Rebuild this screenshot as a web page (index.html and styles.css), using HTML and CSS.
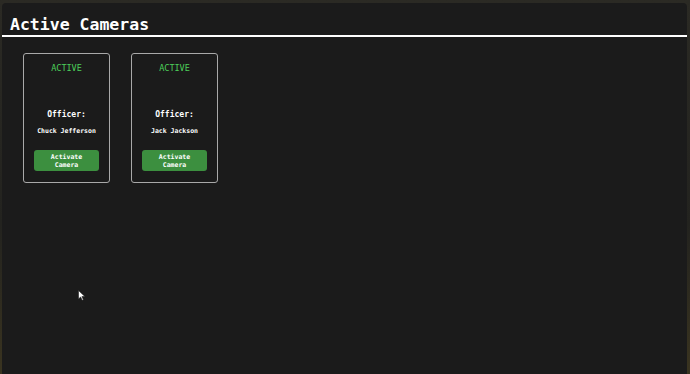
FILE: index.html
```html
<!DOCTYPE html>
<html lang="en">
<head>
  <meta charset="UTF-8">
  <title>Active Cameras</title>
  <link rel="stylesheet" href="styles.css">
</head>
<body>
  <div class="panel">
    <div class="panel-header">Active Cameras</div>
    <div class="camera-list">
      <div class="camera-card">
        <div class="status">ACTIVE</div>
        <div class="officer-label">Officer:</div>
        <div class="officer-name">Chuck Jefferson</div>
        <button class="activate-btn">Activate Camera</button>
      </div>
      <div class="camera-card">
        <div class="status">ACTIVE</div>
        <div class="officer-label">Officer:</div>
        <div class="officer-name">Jack Jackson</div>
        <button class="activate-btn">Activate Camera</button>
      </div>
    </div>
    <svg class="cursor" width="8" height="11" viewBox="0 0 8 11">
      <path d="M0.5 0.5 L0.5 9 L2.6 7 L4.2 10.3 L5.4 9.7 L3.9 6.6 L6.8 6.4 Z" fill="#fff" stroke="#222" stroke-width="0.6"/>
    </svg>
  </div>
</body>
</html>
```

FILE: styles.css
```css
* {
  box-sizing: border-box;
  font-family: 'DejaVu Sans Mono', 'Liberation Mono', monospace;
}

body {
  margin: 0;
  width: 690px;
  height: 374px;
  overflow: hidden;
  background: linear-gradient(180deg, #2b2a24 0%, #23231f 60%, #3a3420 100%);
}

.panel {
  position: relative;
  margin: 3px 3px 0 2px;
  height: 371px;
  background: #1b1b1b;
  border-radius: 4px 4px 0 0;
}

.panel-header {
  padding: 12px 8px 0;
  font-size: 16.5px;
  line-height: 20px;
  font-weight: bold;
  color: #fff;
  border-bottom: 2px solid #fff;
}

.camera-list {
  display: flex;
  gap: 21px;
  padding: 16px 21px;
}

.camera-card {
  width: 87px;
  height: 130px;
  padding: 9px 10px 11px;
  display: flex;
  flex-direction: column;
  align-items: center;
  border: 1px solid #a9a9a9;
  border-radius: 3px;
}

.status {
  color: #4cd05a;
  font-size: 8.5px;
  line-height: 10px;
}

.officer-label {
  margin-top: 36px;
  color: #fff;
  font-size: 8px;
  line-height: 12px;
  font-weight: bold;
}

.officer-name {
  margin-top: 5px;
  color: #fff;
  font-size: 6.5px;
  line-height: 10px;
  font-weight: bold;
}

.activate-btn {
  margin-top: auto;
  width: 65px;
  height: 21px;
  padding: 0 4px;
  border: none;
  border-radius: 3px;
  background: #3c8f3f;
  color: #fff;
  font-size: 6.5px;
  line-height: 8px;
  font-weight: bold;
}

.cursor {
  position: absolute;
  left: 76px;
  top: 287px;
}
```
